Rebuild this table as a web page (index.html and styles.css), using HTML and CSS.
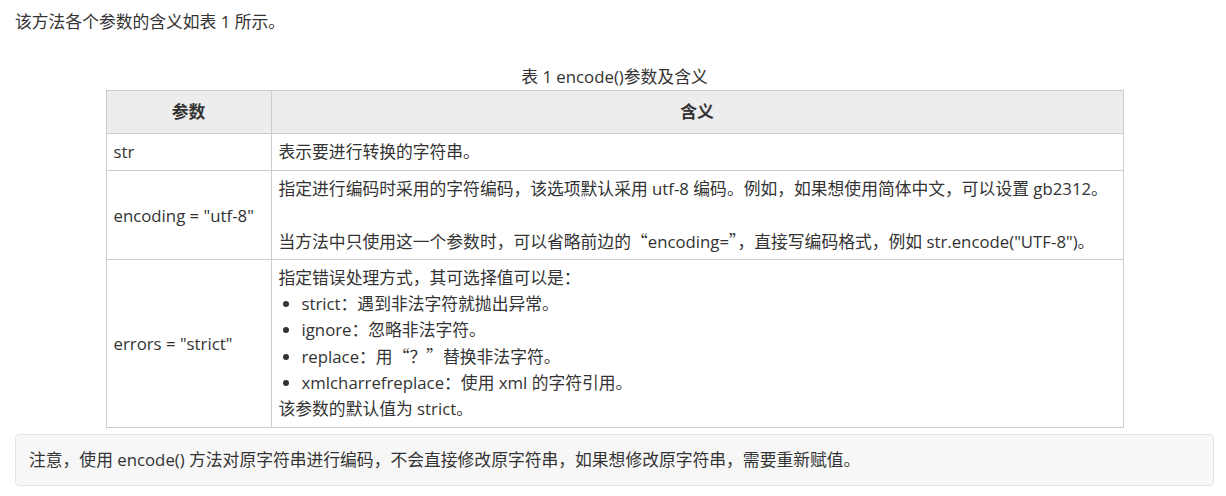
FILE: index.html
```html
<!DOCTYPE html>
<html lang="zh-CN">
<head>
<meta charset="utf-8">
<link rel="stylesheet" href="styles.css">
</head>
<body>
<div class="page">
  <p class="intro">该方法各个参数的含义如表 1 所示。</p>
  <table class="params">
    <caption>表 1 encode()参数及含义</caption>
    <thead>
      <tr><th class="col-name">参数</th><th>含义</th></tr>
    </thead>
    <tbody>
      <tr><td>str</td><td>表示要进行转换的字符串。</td></tr>
      <tr><td class="tight">encoding = "utf-8"</td><td class="tight">指定进行编码时采用的字符编码，该选项默认采用 utf-8 编码。例如，如果想使用简体中文，可以设置 gb2312。<br><br>当方法中只使用这一个参数时，可以省略前边的<span class="cjk">“</span>encoding=<span class="cjk">”</span>，直接写编码格式，例如 str.encode("UTF-8")。</td></tr>
      <tr><td>errors = "strict"</td><td>指定错误处理方式，其可选择值可以是：
        <ul>
          <li>strict：遇到非法字符就抛出异常。</li>
          <li>ignore：忽略非法字符。</li>
          <li>replace：用<span class="cjk">“？”</span>替换非法字符。</li>
          <li>xmlcharrefreplace：使用 xml 的字符引用。</li>
        </ul>
        该参数的默认值为 strict。</td></tr>
    </tbody>
  </table>
  <div class="note">注意，使用 encode() 方法对原字符串进行编码，不会直接修改原字符串，如果想修改原字符串，需要重新赋值。</div>
</div>
</body>
</html>
```
FILE: styles.css
```css
html, body {
  margin: 0;
  padding: 0;
  background: #fff;
}
body {
  font-family: "Open Sans", "Noto Sans CJK SC", sans-serif;
  font-size: 16.8px;
  line-height: 26px;
  color: #333;
}
.cjk {
  font-family: "Noto Sans CJK SC", sans-serif;
}
.page {
  padding: 9px 12px 0 15px;
}
.intro {
  margin: 0 0 29px 0;
}
.params {
  width: 1018px;
  margin: 0 auto;
  border-collapse: collapse;
}
.params caption {
  line-height: 26px;
  text-align: center;
}
.params th,
.params td {
  border: 1px solid #ccc;
  text-align: left;
  vertical-align: middle;
  padding: 5px 1px 5px 7px;
}
.params td.tight {
  padding-bottom: 4px;
}
.params th {
  background: #ededed;
  text-align: center;
  font-weight: bold;
  padding: 8px 7px;
}
.params .col-name {
  width: 150px;
}
.params ul {
  margin: 0;
  padding-left: 23px;
}
.note {
  margin-top: 6px;
  background: #f7f7f7;
  border: 1px solid #e3e3e3;
  border-radius: 4px;
  padding: 12px 13px;
}
```
